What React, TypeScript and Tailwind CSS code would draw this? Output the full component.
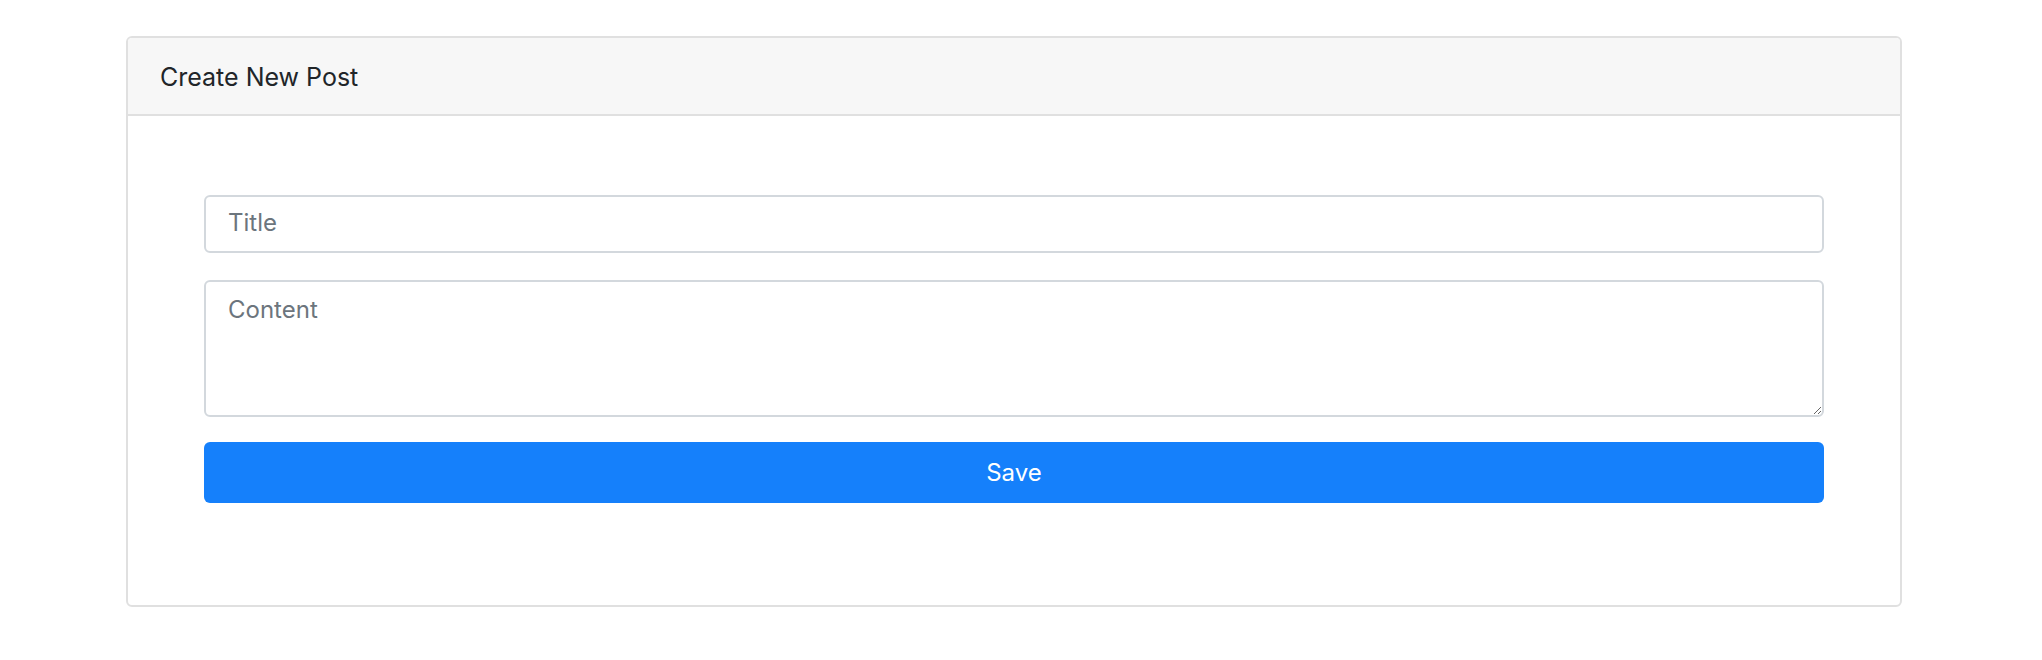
import React from 'react';

const App: React.FC = () => {
  return (
    <div className="min-h-screen bg-white pt-[36px] font-['Inter',sans-serif] text-[#212529]">
      <div className="ml-[126px] w-[1776px] border-2 border-[#e0e0e0] rounded-[6px] overflow-hidden">
        <div className="h-[78px] flex items-center pl-[32px] pt-[4px] bg-[#f7f7f7] border-b-2 border-[#e0e0e0] text-[25px]">
          Create New Post
        </div>
        <form
          className="flex flex-col px-[76px] pt-[79px] pb-[102px]"
          onSubmit={(e) => e.preventDefault()}
        >
          <input
            type="text"
            placeholder="Title"
            className="h-[58px] px-[22px] pb-[4px] text-[24px] border-2 border-[#d3d8dd] rounded-[6px] outline-none placeholder:text-[#6c757d]"
          />
          <textarea
            placeholder="Content"
            className="mt-[27px] h-[137px] px-[22px] pt-[10px] text-[24px] leading-[36px] border-2 border-[#d3d8dd] rounded-[6px] outline-none placeholder:text-[#6c757d]"
          />
          <button
            type="submit"
            className="mt-[25px] h-[61px] rounded-[6px] bg-[#1580fb] text-white text-[24px]"
          >
            Save
          </button>
        </form>
      </div>
    </div>
  );
};

export default App;
